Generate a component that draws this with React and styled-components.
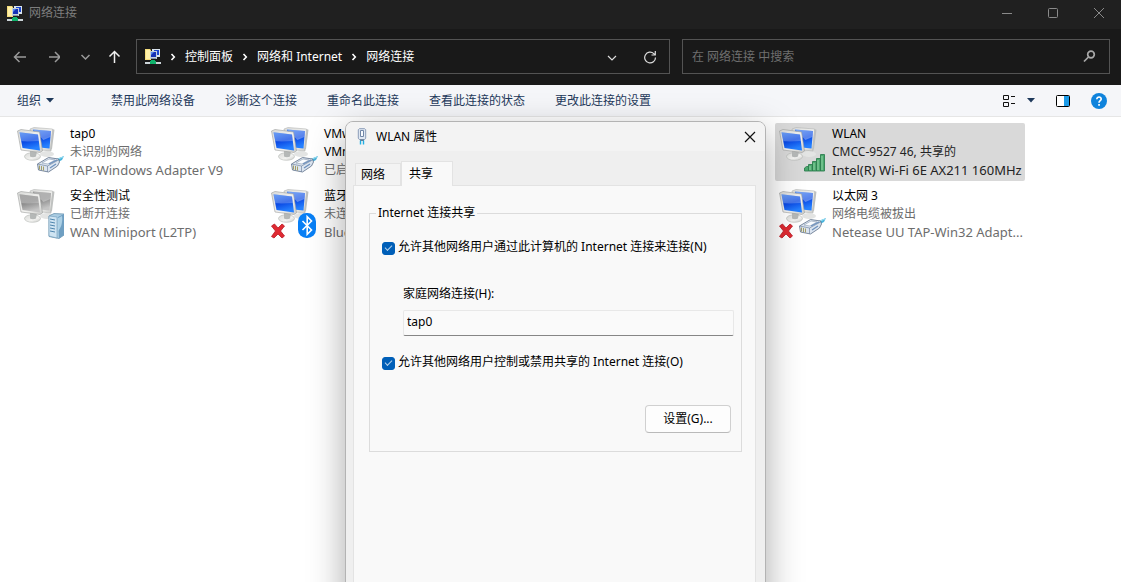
import React, { useId, useState } from "react";
import styled, { createGlobalStyle } from "styled-components";

const GlobalStyle = createGlobalStyle`
  * {
    box-sizing: border-box;
  }
  body {
    margin: 0;
    overflow: hidden;
    background-color: #fff;
    font-family: "Noto Sans", "Noto Sans CJK SC", sans-serif;
    font-size: 12px;
    line-height: 18px;
    color: #000;
  }
  button,
  input {
    font: inherit;
    color: inherit;
  }
  button {
    padding: 0;
    border: 0;
    background: none;
  }
  svg {
    display: block;
    flex-shrink: 0;
  }
`;

const Window = styled.div`
  position: relative;
  display: flex;
  flex-direction: column;
  height: 100vh;
  overflow: hidden;
`;

const TitleBar = styled.header`
  display: flex;
  align-items: center;
  height: 29px;
  padding: 0 14px 3px 7px;
  gap: 6px;
  background-color: #202020;
  color: #7d7d7d;
  h1 {
    flex: 1;
    margin: 0;
    font-size: 12px;
    font-weight: 400;
  }
`;

const WindowButtons = styled.div`
  display: flex;
  gap: 30px;
`;

const NavBar = styled.nav`
  display: flex;
  align-items: center;
  padding: 10px 11px 11px 12px;
  background-color: #191919;
  color: #fff;
`;

const NavButtons = styled.div`
  display: flex;
  gap: 16px;
  width: 124px;
  color: #9a9a9a;
  .up {
    color: #f0f0f0;
  }
`;

const AddressBar = styled.div`
  flex: 512;
  display: flex;
  align-items: center;
  height: 35px;
  padding: 0 12px 0 8px;
  border: 1px solid #535353;
  ol {
    flex: 1;
    display: flex;
    margin: 0;
    padding: 0;
    list-style: none;
  }
  li {
    display: flex;
    align-items: center;
  }
  li svg {
    margin: 0 8px;
  }
  a {
    color: #fff;
    text-decoration: none;
  }
  > button {
    margin-left: 26px;
  }
`;

const SearchBox = styled.form`
  flex: 404;
  display: flex;
  align-items: center;
  height: 35px;
  margin-left: 12px;
  padding: 0 13px 0 9px;
  border: 1px solid #535353;
  color: #a8a8a8;
  input {
    flex: 1;
    min-width: 0;
    padding: 0;
    border: 0;
    outline: 0;
    background: none;
    &::placeholder {
      color: #6f6f6f;
      opacity: 1;
    }
  }
`;

const Toolbar = styled.div`
  display: flex;
  align-items: center;
  height: 32px;
  padding: 0 14px 0 17px;
  border-bottom: 1px solid #e6e6e6;
  background-color: #f5f6f9;
  color: #1e395b;
`;

const Commands = styled.div`
  flex: 1;
  display: flex;
  gap: 30px;
  white-space: nowrap;
`;

const Organize = styled.button`
  display: flex;
  align-items: center;
  gap: 5px;
  width: 64px;
`;

const ViewTools = styled.div`
  display: flex;
  align-items: center;
  button + button {
    margin-left: 21px;
  }
  button.arrow {
    margin-left: 11px;
  }
`;

const Connections = styled.ul`
  flex: 1;
  display: grid;
  grid-template-columns: repeat(4, 250px);
  grid-auto-rows: 58px;
  gap: 4px;
  margin: 0;
  padding: 6px 13px;
  list-style: none;
`;

const Connection = styled.li`
  grid-column: ${({ $column }) => $column};
  display: flex;
  gap: 6px;
  padding: 2px 3px;
  border-radius: 2px;
  background-color: ${({ $selected }) => ($selected ? "#d9d9d9" : "transparent")};
  color: ${({ $selected }) => ($selected ? "#222" : "#6d6d6d")};
`;

const Details = styled.div`
  flex: 1;
  min-width: 0;
  white-space: nowrap;
  p {
    margin: 0;
  }
  .name {
    color: #000;
    white-space: pre-line;
  }
  .device {
    font-size: 13px;
  }
`;

const Dialog = styled.section`
  position: absolute;
  top: 121px;
  bottom: -40px;
  left: 345px;
  width: 421px;
  display: flex;
  flex-direction: column;
  border: 1px solid #b3b3b3;
  border-radius: 8px;
  background-color: #efefef;
  box-shadow: 0 12px 36px rgba(0, 0, 0, 0.34);
`;

const DialogTitle = styled.header`
  display: flex;
  align-items: center;
  gap: 8px;
  height: 29px;
  padding: 0 9px 0 10px;
  border-radius: 7px 7px 0 0;
  background-color: #f3f3f3;
  h2 {
    flex: 1;
    margin: 0;
    font-size: 12px;
    font-weight: 400;
  }
`;

const Tabs = styled.div`
  display: flex;
  align-items: flex-end;
  height: 34px;
  padding-left: 9px;
`;

const Tab = styled.button`
  position: relative;
  z-index: ${({ $active }) => ($active ? 1 : 0)};
  width: ${({ $active }) => ($active ? 52 : 46)}px;
  height: ${({ $active }) => ($active ? 25 : 22)}px;
  margin-bottom: ${({ $active }) => ($active ? -1 : 0)}px;
  padding-left: ${({ $active }) => ($active ? 7 : 5)}px;
  border: 1px solid #e3e3e3;
  border-bottom: 0;
  background-color: ${({ $active }) => ($active ? "#f9f9f9" : "#f3f3f3")};
  text-align: left;
`;

const TabPanel = styled.div`
  flex: 1;
  margin: 0 9px 0 7px;
  padding: 18px 13px 0 15px;
  border: 1px solid #e3e3e3;
  background-color: #f9f9f9;
`;

const Group = styled.fieldset`
  display: flex;
  flex-direction: column;
  margin: 0;
  padding: 16px 8px 18px 12px;
  border: 1px solid #dcdcdc;
  legend {
    margin-left: -6px;
    padding: 0 2px;
  }
`;

const CheckRow = styled.label`
  display: flex;
  align-items: center;
  gap: 3px;
  white-space: nowrap;
  input {
    appearance: none;
    display: grid;
    place-items: center;
    width: 13px;
    height: 13px;
    margin: 2px 0 0;
    border: 1px solid #868686;
    border-radius: 3px;
    &:checked {
      border-color: #005fb8;
      background-color: #005fb8;
    }
    &:checked::after {
      content: "";
      width: 6px;
      height: 3px;
      margin-bottom: 2px;
      border: solid #b5d2ec;
      border-width: 0 0 1px 1px;
      transform: rotate(-45deg);
    }
  }
`;

const Field = styled.div`
  display: flex;
  flex-direction: column;
  gap: 7px;
  margin: 29px -1px 17px 21px;
  input {
    width: 100%;
    height: 26px;
    padding: 0 3px 3px;
    border: 1px solid #e8e8e8;
    border-bottom-color: #868686;
    border-radius: 2px;
    outline: 0;
    background-color: #fafafa;
  }
`;

const SettingsButton = styled.button`
  align-self: flex-end;
  width: 86px;
  height: 28px;
  margin: 34px 2px 0 0;
  border: 1px solid #d0d0d0;
  border-bottom-color: #bababa;
  border-radius: 4px;
  background-color: #fdfdfd;
`;

const FolderIcon = () => (
  <svg width="16" height="17" viewBox="0 0 16 17">
    <path d="M0 1h5l1 1v10H0z" fill="#f5dd7c" />
    <path d="M1 2h4v9H1z" fill="#fff0a8" />
    <path d="M7 1h8v8H7z" fill="#d9e4ee" />
    <path d="M9 2h5v5H9z" fill="#1c46cf" />
    <path d="M5 3h7v8H5z" fill="#c3cfdb" />
    <path d="M6 4h5v5H6z" fill="#1531b5" />
    <path d="M6 4h3L6 7z" fill="#5688f0" />
    <path d="M6 10h5v1H6z" fill="#8697a8" />
    <path d="M6 12h4v1h1v3H5v-3h1z" fill="#10b26b" />
    <path d="M0 14h5v2H0zM11 14h5v2h-5z" fill="#cbd4d8" />
  </svg>
);

const ArrowIcon = ({ d }) => (
  <svg width="16" height="16" viewBox="0 0 16 16" fill="none" stroke="currentColor" strokeWidth="1.5">
    <path d={d} />
  </svg>
);

const Separator = () => (
  <svg width="8" height="8" viewBox="0 0 8 8" fill="none" stroke="#fff" strokeWidth="1.6">
    <path d="M2.5 1 5.3 4 2.5 7" />
  </svg>
);

const Triangle = () => (
  <svg width="8" height="5" viewBox="0 0 8 5" fill="#1e395b">
    <path d="M0 0h8L4 4.5z" />
  </svg>
);

const HelpIcon = () => (
  <svg width="16" height="16" viewBox="0 0 16 16">
    <circle cx="8" cy="8" r="8" fill="#0f83dc" />
    <path d="M5.8 6.2c0-3 4.6-2.8 4.4-.1C10.1 7.7 8 7.7 8 9.8" fill="none" stroke="#fff" strokeWidth="1.6" />
    <path d="M7.2 11h1.7v1.7H7.2z" fill="#fff" />
  </svg>
);

const AdapterIcon = () => (
  <svg width="12" height="17" viewBox="0 0 12 17">
    <path d="M3.3.7h5.4l1 1v8.5l-1 1.3H3.3l-1-1.3V1.7z" fill="#dfe7f2" stroke="#8b9db8" />
    <path d="M4.5 2.500h3v6h-3z" fill="#f8fbff" stroke="#7086a7" />
    <path d="M4 11.5h4V13H4z" fill="#65788e" />
    <path d="M4.5 12.5v4M7.5 12.5v4" stroke="#21afe4" strokeWidth="1.4" />
  </svg>
);

const PlugBadge = () => (
  <g>
    <path d="m38 35 10-4-2 4-6 3z" fill="#48b4dc" />
    <path d="m42 34 5-2" stroke="#9be0f3" />
    <path d="m21.5 39 11-6.5 10 1.5 1 3-2 4-9 6-10-2z" fill="#dce5f0" stroke="#5d6f88" strokeWidth=".8" />
    <path d="m21.5 39 10 2 11-6M31.5 41v6" fill="none" stroke="#7486a0" strokeWidth=".7" />
    <path d="m26 38 7-4 6 1-7 4z" fill="#fafcff" stroke="#8d9db2" strokeWidth=".6" />
    <path d="M23.5 40.5v4M25.5 41v4M27.5 41.5v4" stroke="#9c9558" strokeWidth=".9" />
    <path d="m34 43 6-4m-7 0 8-4" stroke="#6b8fbd" strokeWidth="1.2" />
  </g>
);

const ServerBadge = () => (
  <g transform="translate(0 3)">
    <path d="m33 26 5-2.5 10 .5v21l-5 3.5-10-2z" fill="#a9cce2" stroke="#5d89a8" strokeWidth=".7" />
    <path d="m33 26 8 1v21l-8-2z" fill="#cfe4f2" stroke="#6f9bb8" strokeWidth=".6" />
    <path d="m42 27 6-3v21l-5 3.5z" fill="#6f9fc2" />
    <path d="m34 29 5 1m-5 2 5 1m-5 2 5 1m-5 2 5 1m-5 2 5 1" stroke="#4f86ae" />
    <path d="M46 26c1 6-1 12-4 15V28z" fill="#bcdcee" opacity=".8" />
  </g>
);

const BluetoothBadge = () => (
  <g>
    <rect x="28" y="26" width="18" height="25" rx="8.5" fill="#087ff5" />
    <path d="m32.5 34 9 9-4.3 4.3V29.7l4.300 4.300-9 9" fill="none" stroke="#fff" strokeWidth="1.6" />
  </g>
);

const SignalBadge = () => (
  <g fill="#4aa86d" stroke="#2f7f50" strokeWidth=".9">
    <path d="M26.5 46v-3l2-1.5h2V46zM30.5 39.500h4V46h-4zM34.5 36.5h4V46h-4zM38.5 33.5h4V46h-4zM42.5 29.5h4V46h-4z" />
    <path d="M32 41v4M36 38v7M40 35v10M44 31v14" stroke="#9bdcae" />
  </g>
);

const CrossBadge = () => (
  <path
    d="m1.5 39 3-2 3.5 4 4-4 2.5 2-4 5 4 5-2.5 2-4-4-4 4-2.5-1.5L5.500 44z"
    fill="#e02a32"
    stroke="#b81a24"
    strokeWidth=".8"
  />
);

const badges = {
  plug: PlugBadge,
  server: ServerBadge,
  bluetooth: BluetoothBadge,
  signal: SignalBadge,
};

const ConnectionIcon = ({ badge, off, failed }) => {
  const id = useId();
  const Badge = badges[badge];
  return (
    <svg width="48" height="54" viewBox="0 0 48 54">
      <defs>
        <linearGradient id={`${id}s`} x1="0" y1="0" x2=".3" y2="1">
          <stop offset="0" stopColor={off ? "#8a8a8a" : "#3c7ff0"} />
          <stop offset=".55" stopColor={off ? "#8e8e8e" : "#0b49e4"} />
          <stop offset="1" stopColor={off ? "#c4c4c4" : "#2580ff"} />
        </linearGradient>
        <linearGradient id={`${id}b`} x1="0" y1="0" x2="1" y2="1">
          <stop offset="0" stopColor="#d9dad8" />
          <stop offset=".6" stopColor="#f3f3f1" />
          <stop offset="1" stopColor="#c9cac8" />
        </linearGradient>
      </defs>
      <ellipse cx="31" cy="29" rx="7" ry="3" fill="#e3e4e3" />
      <path d="m14 4 4-1.500 18.500 1.500-1.500 22-19-2z" fill={`url(#${id}b)`} stroke="#b4b6b4" strokeWidth=".6" />
      <path d="m36.500 4 2 .8-2.500 19-2 2z" fill="#bfc1c0" />
      <path d="m17 4.500 18 1.500-1.500 17.500L19 22z" fill={`url(#${id}s)`} />
      <path d="m17 4.500 18 1.500-.6 6-7 3z" fill="#fff" opacity=".32" />
      <ellipse cx="16.500" cy="31.500" rx="8" ry="3.800" fill={`url(#${id}b)`} stroke="#b6b8b6" strokeWidth=".6" />
      <path d="m14 25 7 1-1 5.500c-1.500 1-4.500 1-6 0z" fill="#b5b8b7" />
      <path d="M1.500 6 5 4.500l18.500 2.500L26.500 26l-2.500 1.500L5 25z" fill={`url(#${id}b)`} stroke="#9c9e9c" strokeWidth=".6" />
      <path d="m3.500 7.300 18.500 2.200 2 16L6.500 23z" fill={`url(#${id}s)`} />
      <path d="m3.500 7.300 18.500 2.200.8 6.500C17 16 11 17 5.300 16z" fill="#fff" opacity=".24" />
      <Badge />
      {failed && <CrossBadge />}
    </svg>
  );
};

const connections = [
  { column: 1, name: "tap0", status: "未识别的网络", device: "TAP-Windows Adapter V9", badge: "plug" },
  { column: 2, name: "VMware\nVMnet8", status: "已启用", badge: "plug" },
  {
    column: 4,
    name: "WLAN",
    status: "CMCC-9527 46, 共享的",
    device: "Intel(R) Wi-Fi 6E AX211 160MHz",
    badge: "signal",
    selected: true,
  },
  { column: 1, name: "安全性测试", status: "已断开连接", device: "WAN Miniport (L2TP)", badge: "server", off: true },
  { column: 2, name: "蓝牙", status: "未连接", device: "Bluetooth", badge: "bluetooth", failed: true },
  {
    column: 4,
    name: "以太网 3",
    status: "网络电缆被拔出",
    device: "Netease UU TAP-Win32 Adapt...",
    badge: "plug",
    failed: true,
  },
];

const crumbs = ["控制面板", "网络和 Internet", "网络连接"];

const commands = ["禁用此网络设备", "诊断这个连接", "重命名此连接", "查看此连接的状态", "更改此连接的设置"];

const PropertiesDialog = () => {
  const [share, setShare] = useState(true);
  const [control, setControl] = useState(true);

  return (
    <Dialog role="dialog" aria-labelledby="dialog-title">
      <DialogTitle>
        <AdapterIcon />
        <h2 id="dialog-title">WLAN 属性</h2>
        <button aria-label="关闭">
          <svg width="12" height="12" viewBox="0 0 12 12" stroke="#111" strokeWidth="1.2">
            <path d="m1 1 10 10M11 1 1 11" />
          </svg>
        </button>
      </DialogTitle>
      <Tabs role="tablist">
        <Tab role="tab" aria-selected="false">
          网络
        </Tab>
        <Tab role="tab" aria-selected="true" $active>
          共享
        </Tab>
      </Tabs>
      <TabPanel role="tabpanel">
        <Group>
          <legend>Internet 连接共享</legend>
          <CheckRow>
            <input type="checkbox" checked={share} onChange={() => setShare(!share)} />
            允许其他网络用户通过此计算机的 Internet 连接来连接(N)
          </CheckRow>
          <Field>
            <label htmlFor="home">家庭网络连接(H):</label>
            <input id="home" type="text" defaultValue="tap0" />
          </Field>
          <CheckRow>
            <input type="checkbox" checked={control} onChange={() => setControl(!control)} />
            允许其他网络用户控制或禁用共享的 Internet 连接(O)
          </CheckRow>
          <SettingsButton>设置(G)...</SettingsButton>
        </Group>
      </TabPanel>
    </Dialog>
  );
};

const App = () => {
  return (
    <>
      <GlobalStyle />
      <Window>
        <TitleBar>
          <FolderIcon />
          <h1>网络连接</h1>
          <WindowButtons>
            <button aria-label="最小化">
              <svg width="16" height="12" viewBox="0 0 16 12" stroke="#8a8a8a">
                <path d="M3 6.5h10" />
              </svg>
            </button>
            <button aria-label="最大化">
              <svg width="16" height="12" viewBox="0 0 16 12" fill="none" stroke="#8a8a8a">
                <rect x="3.5" y="1.5" width="9" height="9" rx="1" />
              </svg>
            </button>
            <button aria-label="关闭">
              <svg width="16" height="12" viewBox="0 0 16 12" stroke="#8a8a8a">
                <path d="m3 1 10 10M13 1 3 11" />
              </svg>
            </button>
          </WindowButtons>
        </TitleBar>
        <NavBar>
          <NavButtons>
            <button aria-label="后退">
              <ArrowIcon d="M14 8H2.5M7.5 3l-5 5 5 5" />
            </button>
            <button aria-label="前进">
              <ArrowIcon d="M5 8h11M11 3l5 5-5 5" />
            </button>
            <button aria-label="最近浏览的位置">
              <ArrowIcon d="m5.5 6 4 4 4-4" />
            </button>
            <button className="up" aria-label="上移">
              <ArrowIcon d="M6.5 14V2.5M1.5 7.5l5-5 5 5" />
            </button>
          </NavButtons>
          <AddressBar>
            <FolderIcon />
            <ol>
              {crumbs.map((crumb) => (
                <li key={crumb}>
                  <Separator />
                  <a href="#">{crumb}</a>
                </li>
              ))}
            </ol>
            <button aria-label="历史记录">
              <svg width="10" height="10" viewBox="0 0 10 10" fill="none" stroke="#ddd" strokeWidth="1.2">
                <path d="m1 4 4 4 4-4" />
              </svg>
            </button>
            <button aria-label="刷新">
              <svg width="14" height="14" viewBox="0 0 14 14" fill="none" stroke="#ddd" strokeWidth="1.2">
                <path d="M12.5 7.5A5.4 5.4 0 1 1 10.8 3.6L12 4.8M12.3 1v4H8.5" />
              </svg>
            </button>
          </AddressBar>
          <SearchBox>
            <input type="text" placeholder="在 网络连接 中搜索" aria-label="搜索" />
            <button aria-label="搜索">
              <svg width="13" height="13" viewBox="0 0 13 13" fill="none" stroke="currentColor" strokeWidth="1.7">
                <circle cx="8" cy="4.5" r="3.3" />
                <path d="M5.5 7 1 11.5" />
              </svg>
            </button>
          </SearchBox>
        </NavBar>
        <Toolbar>
          <Commands>
            <Organize>
              组织
              <Triangle />
            </Organize>
            {commands.map((command) => (
              <button key={command}>{command}</button>
            ))}
          </Commands>
          <ViewTools>
            <button aria-label="视图">
              <svg width="13" height="12" viewBox="0 0 13 12" fill="none" stroke="#111">
                <path d="M.5.5h5v4h-5zM.5 7.5h5v4h-5zM8 1.5h4M8 8.5h4" />
              </svg>
            </button>
            <button className="arrow" aria-label="更多选项">
              <Triangle />
            </button>
            <button aria-label="预览窗格">
              <svg width="14" height="12" viewBox="0 0 14 12">
                <rect x=".5" y=".5" width="13" height="11" rx="1" fill="#fff" stroke="#000" />
                <path d="M8 1h5v10H8z" fill="#1c9be8" />
              </svg>
            </button>
            <button aria-label="帮助">
              <HelpIcon />
            </button>
          </ViewTools>
        </Toolbar>
        <Connections>
          {connections.map((item) => (
            <Connection key={item.name} $column={item.column} $selected={item.selected}>
              <ConnectionIcon badge={item.badge} off={item.off} failed={item.failed} />
              <Details>
                <p className="name">{item.name}</p>
                <p>{item.status}</p>
                {item.device && <p className="device">{item.device}</p>}
              </Details>
            </Connection>
          ))}
        </Connections>
        <PropertiesDialog />
      </Window>
    </>
  );
};

export default App;
